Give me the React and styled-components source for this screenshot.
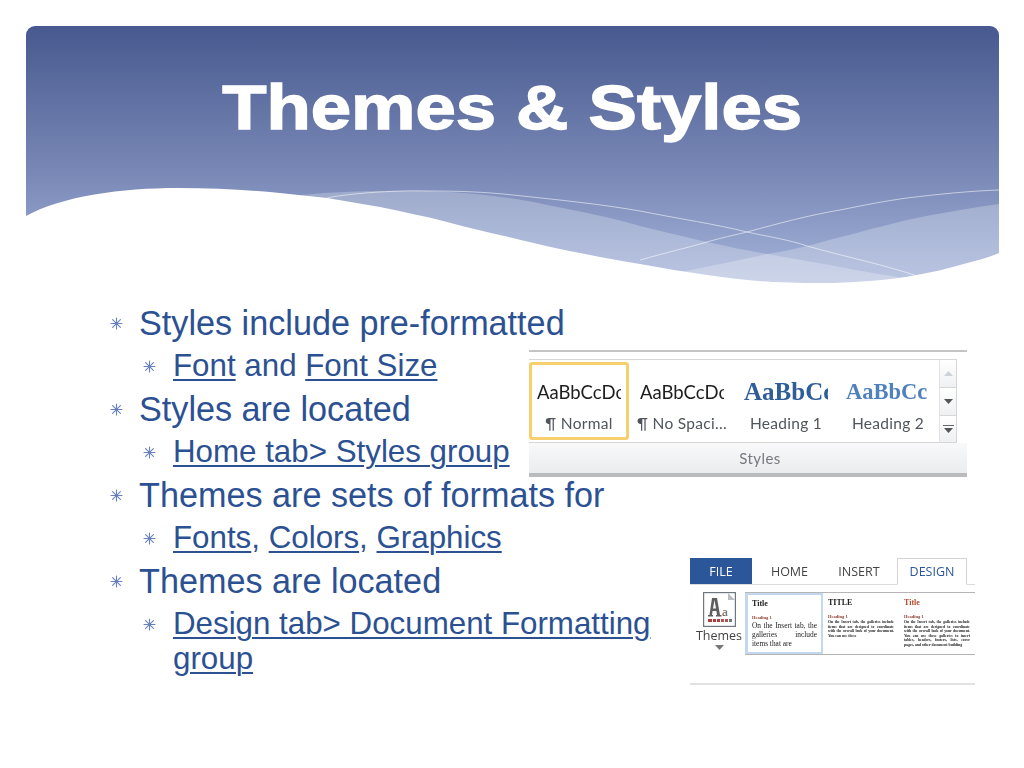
import React from "react";
import styled, { createGlobalStyle } from "styled-components";

const Global = createGlobalStyle`
  html, body { margin: 0; padding: 0; background: #fff; }
  body { font-family: "Liberation Sans", Arial, sans-serif; }
`;

const Slide = styled.div`
  width: 1024px;
  height: 768px;
  overflow: hidden;
  padding-top: 26px;
  box-sizing: border-box;
`;

const Header = styled.header`
  position: relative;
  margin-left: 26px;
  width: 973px;
  height: 259px;
  border-radius: 9px 9px 0 0;
  background: linear-gradient(180deg, #47598f 0%, #7887b5 55.6%, #93a3cc 83%, #a4b3d8 100%);
  display: flex;
  justify-content: center;
  overflow: hidden;
`;

const Title = styled.h1`
  margin: 45px 0 0;
  font-family: "Liberation Sans", Arial, sans-serif;
  font-weight: 700;
  font-size: 63px;
  line-height: 72px;
  height: 72px;
  color: #fff;
  -webkit-text-stroke: 1.4px #fff;
  transform: scaleX(1.15);
`;

const WaveArt = styled.svg`
  position: absolute;
  left: 0;
  top: 0;
  width: 973px;
  height: 259px;
`;

const Body = styled.main`
  display: grid;
  grid-template-columns: 419px 1fr;
  padding-left: 110px;
`;

const List = styled.ul`
  list-style: none;
  margin: 21px 0 0;
  padding: 0;
  width: 545px;
  color: #2c5193;
`;

const Item = styled.li`
  display: flex;
  align-items: flex-start;
  margin-bottom: 8.5px;
  padding-left: ${(p) => (p.$sub ? "33px" : "0")};
  font-size: ${(p) => (p.$sub ? "31.3px" : "34.2px")};
  line-height: 34.5px;
`;

const BulletMark = styled.svg`
  flex: none;
  width: 13px;
  height: 13px;
  margin-top: 11px;
  margin-right: ${(p) => (p.$sub ? "17px" : "16px")};
`;

const Link = styled.span`
  text-decoration: underline;
  text-decoration-thickness: 2px;
  text-underline-offset: 3px;
`;

const Figures = styled.div`
  display: flex;
  flex-direction: column;
  padding-top: 65px;
`;

const Ribbon = styled.section`
  width: 438px;
  height: 127px;
  display: flex;
  flex-direction: column;
  background: #fff;
  filter: blur(0.35px);
`;

const RibbonTopRule = styled.div`
  height: 2px;
  background: #c4c4c4;
  margin-bottom: 7px;
`;

const GalleryRow = styled.div`
  width: 428px;
  height: 84px;
  box-sizing: border-box;
  border: 1px solid #d6d6d6;
  border-left: 0;
  display: flex;
  background: #fff;
`;

const StyleCells = styled.div`
  flex: 1;
  display: flex;
  padding-top: 2px;
`;

const StyleCell = styled.div`
  box-sizing: border-box;
  width: ${(p) => p.$w}px;
  height: 78px;
  border: 3px solid ${(p) => (p.$active ? "#f6d06f" : "transparent")};
  border-radius: 3px;
  padding-top: 12px;
  background: #fff;
  display: flex;
  flex-direction: column;
  align-items: center;
`;

const Sample = styled.div`
  width: ${(p) => p.$clip}px;
  height: 30px;
  overflow: hidden;
  white-space: nowrap;
  font-family: ${(p) => (p.$serif ? '"Liberation Serif", serif' : 'Lato, "Liberation Sans", sans-serif')};
  font-weight: ${(p) => (p.$serif ? 700 : 400)};
  font-size: ${(p) => p.$size}px;
  line-height: 30px;
  color: ${(p) => p.$color};
`;

const CellLabel = styled.div`
  margin-top: 3px;
  font-family: Lato, "Liberation Sans", sans-serif;
  font-size: 15.5px;
  line-height: 26px;
  letter-spacing: 0.3px;
  color: #50555c;
  white-space: nowrap;
`;

const ScrollCol = styled.div`
  width: 20px;
  display: flex;
  flex-direction: column;
  border-left: 1px solid #e2e2e2;
`;

const ScrollBtn = styled.div`
  flex: ${(p) => p.$grow};
  display: flex;
  flex-direction: column;
  gap: 2px;
  align-items: center;
  justify-content: center;
  background: linear-gradient(180deg, #fff, #eef0f2);
  border-bottom: 1px solid #d6d6d6;
  &:last-child { border-bottom: 0; }
`;

const ScrollDash = styled.div`
  width: 11px;
  height: 1px;
  background: #666;
`;

const GroupBar = styled.div`
  flex: 1;
  background: linear-gradient(180deg, #f9f9fa, #eaecee);
  display: flex;
  align-items: center;
  justify-content: center;
  padding-left: 24px;
  font-family: Lato, "Liberation Sans", sans-serif;
  font-size: 15px;
  letter-spacing: 0.4px;
  color: #767a80;
  border-bottom: 4px solid #b9bbbd;
`;

const WordPanel = styled.section`
  margin-top: 81px;
  margin-left: 161px;
  width: 285px;
  height: 127px;
  display: flex;
  flex-direction: column;
  filter: blur(0.3px);
  border-bottom: 2px solid #e2e2e2;
  box-sizing: border-box;
`;

const Tabs = styled.div`
  display: flex;
  height: 27px;
  border-bottom: 1px solid #dcdcdc;
  width: 285px;
  box-sizing: border-box;
  font-family: "Open Sans", "Liberation Sans", sans-serif;
  font-size: 12.5px;
`;

const Tab = styled.div`
  width: ${(p) => p.$w}px;
  height: ${(p) => (p.$design ? "27px" : "auto")};
  box-sizing: border-box;
  padding-right: ${(p) => p.$nudge || 0}px;
  display: flex;
  align-items: center;
  justify-content: center;
  background: ${(p) => (p.$file ? "#2b579a" : p.$design ? "#fff" : "transparent")};
  color: ${(p) => (p.$file ? "#fff" : p.$design ? "#2b579a" : "#444")};
  border: ${(p) => (p.$design ? "1px solid #d4d4d4" : "0")};
  border-bottom: ${(p) => (p.$design ? "1px solid #fff" : "0")};
`;

const ToolRow = styled.div`
  display: flex;
  padding-top: 7px;
`;

const ThemesButton = styled.div`
  width: 55px;
  box-sizing: border-box;
  padding-left: 3px;
  display: flex;
  flex-direction: column;
  align-items: center;
  font-family: "Open Sans", "Liberation Sans", sans-serif;
  font-size: 12.5px;
  color: #444;
  line-height: 18px;
`;

const ThemeGallery = styled.div`
  width: 230px;
  height: 63px;
  box-sizing: border-box;
  border-top: 1px solid #b5b5b5;
  border-bottom: 1px solid #b5b5b5;
  display: flex;
`;

const Thumb = styled.div`
  width: ${(p) => p.$w}px;
  box-sizing: border-box;
  overflow: hidden;
  padding: ${(p) => (p.$selected ? "4px 4px" : "5px 5px")};
  border: ${(p) => (p.$selected ? "2px solid #c3d7ee" : "0")};
  border-left-width: ${(p) => (p.$selected ? "3px" : "0")};
  font-family: "Liberation Serif", serif;
  color: #1c1c1c;
`;

const ThumbTitle = styled.div`
  font-weight: 700;
  font-size: 8px;
  line-height: 10px;
  color: ${(p) => p.$color || "#222"};
`;

const ThumbHeading = styled.div`
  font-weight: 700;
  font-size: 4.5px;
  line-height: 6px;
  margin-top: 6px;
  color: #8c3b2e;
`;

const ThumbText = styled.div`
  font-size: ${(p) => p.$size}px;
  line-height: ${(p) => p.$line}px;
  font-weight: ${(p) => p.$weight || 400};
  text-align: justify;
`;

const Bullet = ({ sub }) => (
  <BulletMark $sub={sub} viewBox="0 0 13 13">
    <path
      d="M6.5 1v11M2.6 2.6l7.8 7.8M10.4 2.6l-7.8 7.8M1 6.5h11"
      stroke="#6880bc"
      strokeWidth="1.1"
      strokeLinecap="round"
      fill="none"
    />
  </BulletMark>
);

const Waves = () => (
  <WaveArt viewBox="26 26 973 259">
    <path
      d="M303 195C330 192 360 191 385 191C425 190 490 192 547 205C590 213 620 220 640 226C665 232 690 238 707 242C730 247 750 251 767 254C790 258 815 262 840 267C860 271 885 275 917 280L800 295H303Z"
      fill="#fff"
      opacity="0.25"
    />
    <path
      d="M680 272C710 266 740 260 767 254C785 251 795 249 807 246C840 237 875 228 907 220C940 213 970 208 999 204V295H680Z"
      fill="#fff"
      opacity="0.25"
    />
    <g fill="none" stroke="#fff" strokeWidth="0.9" opacity="0.62">
      <path d="M327 198C345 194 390 190 430 191C460 191 485 192 513 195C560 200 600 204 640 211C680 219 715 224 747 232C770 237 790 240 807 246C850 258 885 265 917 276" />
      <path d="M640 260C665 253 690 247 707 242C720 238 735 235 747 232C780 223 810 215 840 210C865 205 885 201 907 198C940 194 970 191 999 190" />
    </g>
    <path
      d="M26 216C62 196 122 188 178 188C215 188 250 190 280 193C295 195 312 196 327 198C345 201 362 204 380 207C403 212 425 216 447 222C470 228 490 233 513 238C537 244 558 249 580 253C600 257 620 261 640 264C663 268 685 272 707 275C730 278 750 281 773 282C795 283 815 283 833 283C862 282 890 280 917 275C932 272 947 269 960 265C975 261 988 258 999 253V295H26Z"
      fill="#fff"
    />
  </WaveArt>
);

const ThemesIcon = () => (
  <svg width="33" height="35" viewBox="0 0 33 35">
    <rect x="0.6" y="0.6" width="31.8" height="33.8" fill="#fff" stroke="#6f7780" strokeWidth="1.2" />
    <path d="M25 1l7 7h-7z" fill="#b9bdc2" />
    <path d="M9 6h5l3 17h1.5v1.5H13V23h1l-.6-4H9.6L9 23h1v1.5H5V23h1.5zM10 16.500h3L11.500 8z" fill="#5f5f5f" />
    <text x="19" y="24" fontFamily="Liberation Serif, serif" fontSize="13" fill="#555">a</text>
    <g fill="#b23b3b">
      <rect x="5" y="27" width="4" height="3" />
      <rect x="10" y="27" width="3" height="3" />
      <rect x="14" y="27" width="3" height="3" />
      <rect x="18" y="27" width="3" height="3" fill="#a9574f" />
      <rect x="22" y="27" width="3" height="3" fill="#a9574f" />
      <rect x="26" y="27" width="3" height="3" fill="#777" />
    </g>
  </svg>
);

const Caret = ({ color = "#555", flip }) => (
  <svg width="9" height="5" viewBox="0 0 9 5">
    <path d={flip ? "M4.5 0L9 5H0z" : "M0 0h9L4.5 5z"} fill={color} />
  </svg>
);

const items = [
  { t: "Styles include pre-formatted" },
  { sub: true, t: (<><Link>Font</Link> and <Link>Font Size</Link></>) },
  { t: "Styles are located" },
  { sub: true, t: <Link>Home tab&gt; Styles group</Link> },
  { t: "Themes are sets of formats for" },
  { sub: true, t: (<><Link>Fonts</Link>, <Link>Colors</Link>, <Link>Graphics</Link></>) },
  { t: "Themes are located" },
  { sub: true, t: <Link>Design tab&gt; Document Formatting group</Link> },
];

const cells = [
  { w: 100, clip: 84, size: 18.5, color: "#1e1e1e", label: "¶ Normal", active: true, sample: "AaBbCcDc" },
  { w: 106, clip: 84, size: 18.5, color: "#1e1e1e", label: "¶ No Spaci...", sample: "AaBbCcDc" },
  { w: 102, clip: 84, size: 25, color: "#2f5d97", label: "Heading 1", serif: true, sample: "AaBbCc" },
  { w: 102, clip: 84, size: 22.5, color: "#4f81bd", label: "Heading 2", serif: true, sample: "AaBbCc" },
];

export default function App() {
  return (
    <>
      <Global />
      <Slide>
        <Header>
          <Waves />
          <Title>Themes &amp; Styles</Title>
        </Header>
        <Body>
          <List>
            {items.map((it, i) => (
              <Item key={i} $sub={it.sub}>
                <Bullet sub={it.sub} />
                <span>{it.t}</span>
              </Item>
            ))}
          </List>
          <Figures>
            <Ribbon>
              <RibbonTopRule />
              <GalleryRow>
                <StyleCells>
                  {cells.map((c) => (
                    <StyleCell key={c.label} $w={c.w} $active={c.active}>
                      <Sample $clip={c.clip} $size={c.size} $color={c.color} $serif={c.serif}>
                        {c.sample}
                      </Sample>
                      <CellLabel>{c.label}</CellLabel>
                    </StyleCell>
                  ))}
                </StyleCells>
                <ScrollCol>
                  <ScrollBtn $grow={28}><Caret color="#cfd2d6" flip /></ScrollBtn>
                  <ScrollBtn $grow={28}><Caret /></ScrollBtn>
                  <ScrollBtn $grow={27}><ScrollDash /><Caret /></ScrollBtn>
                </ScrollCol>
              </GalleryRow>
              <GroupBar>Styles</GroupBar>
            </Ribbon>
            <WordPanel>
              <Tabs>
                <Tab $w={62} $file>FILE</Tab>
                <Tab $w={75}>HOME</Tab>
                <Tab $w={70} $nudge={6}>INSERT</Tab>
                <Tab $w={70} $design>DESIGN</Tab>
              </Tabs>
              <ToolRow>
                <ThemesButton>
                  <ThemesIcon />
                  <div>Themes</div>
                  <Caret color="#777" />
                </ThemesButton>
                <ThemeGallery>
                  <Thumb $w={78} $selected>
                    <ThumbTitle>Title</ThumbTitle>
                    <ThumbHeading>Heading 1</ThumbHeading>
                    <ThumbText $size={7.4} $line={9}>On the Insert tab, the galleries include items that are</ThumbText>
                  </Thumb>
                  <Thumb $w={76}>
                    <ThumbTitle>TITLE</ThumbTitle>
                    <ThumbHeading>Heading 1</ThumbHeading>
                    <ThumbText $size={3.8} $line={4.6} $weight={700}>On the Insert tab, the galleries include items that are designed to coordinate with the overall look of your document. You can use these</ThumbText>
                  </Thumb>
                  <Thumb $w={76}>
                    <ThumbTitle $color="#b5492d">Title</ThumbTitle>
                    <ThumbHeading>Heading 1</ThumbHeading>
                    <ThumbText $size={3.8} $line={4.6} $weight={700}>On the Insert tab, the galleries include items that are designed to coordinate with the overall look of your document. You can use these galleries to insert tables, headers, footers, lists, cover pages, and other document building</ThumbText>
                  </Thumb>
                </ThemeGallery>
              </ToolRow>
            </WordPanel>
          </Figures>
        </Body>
      </Slide>
    </>
  );
}
